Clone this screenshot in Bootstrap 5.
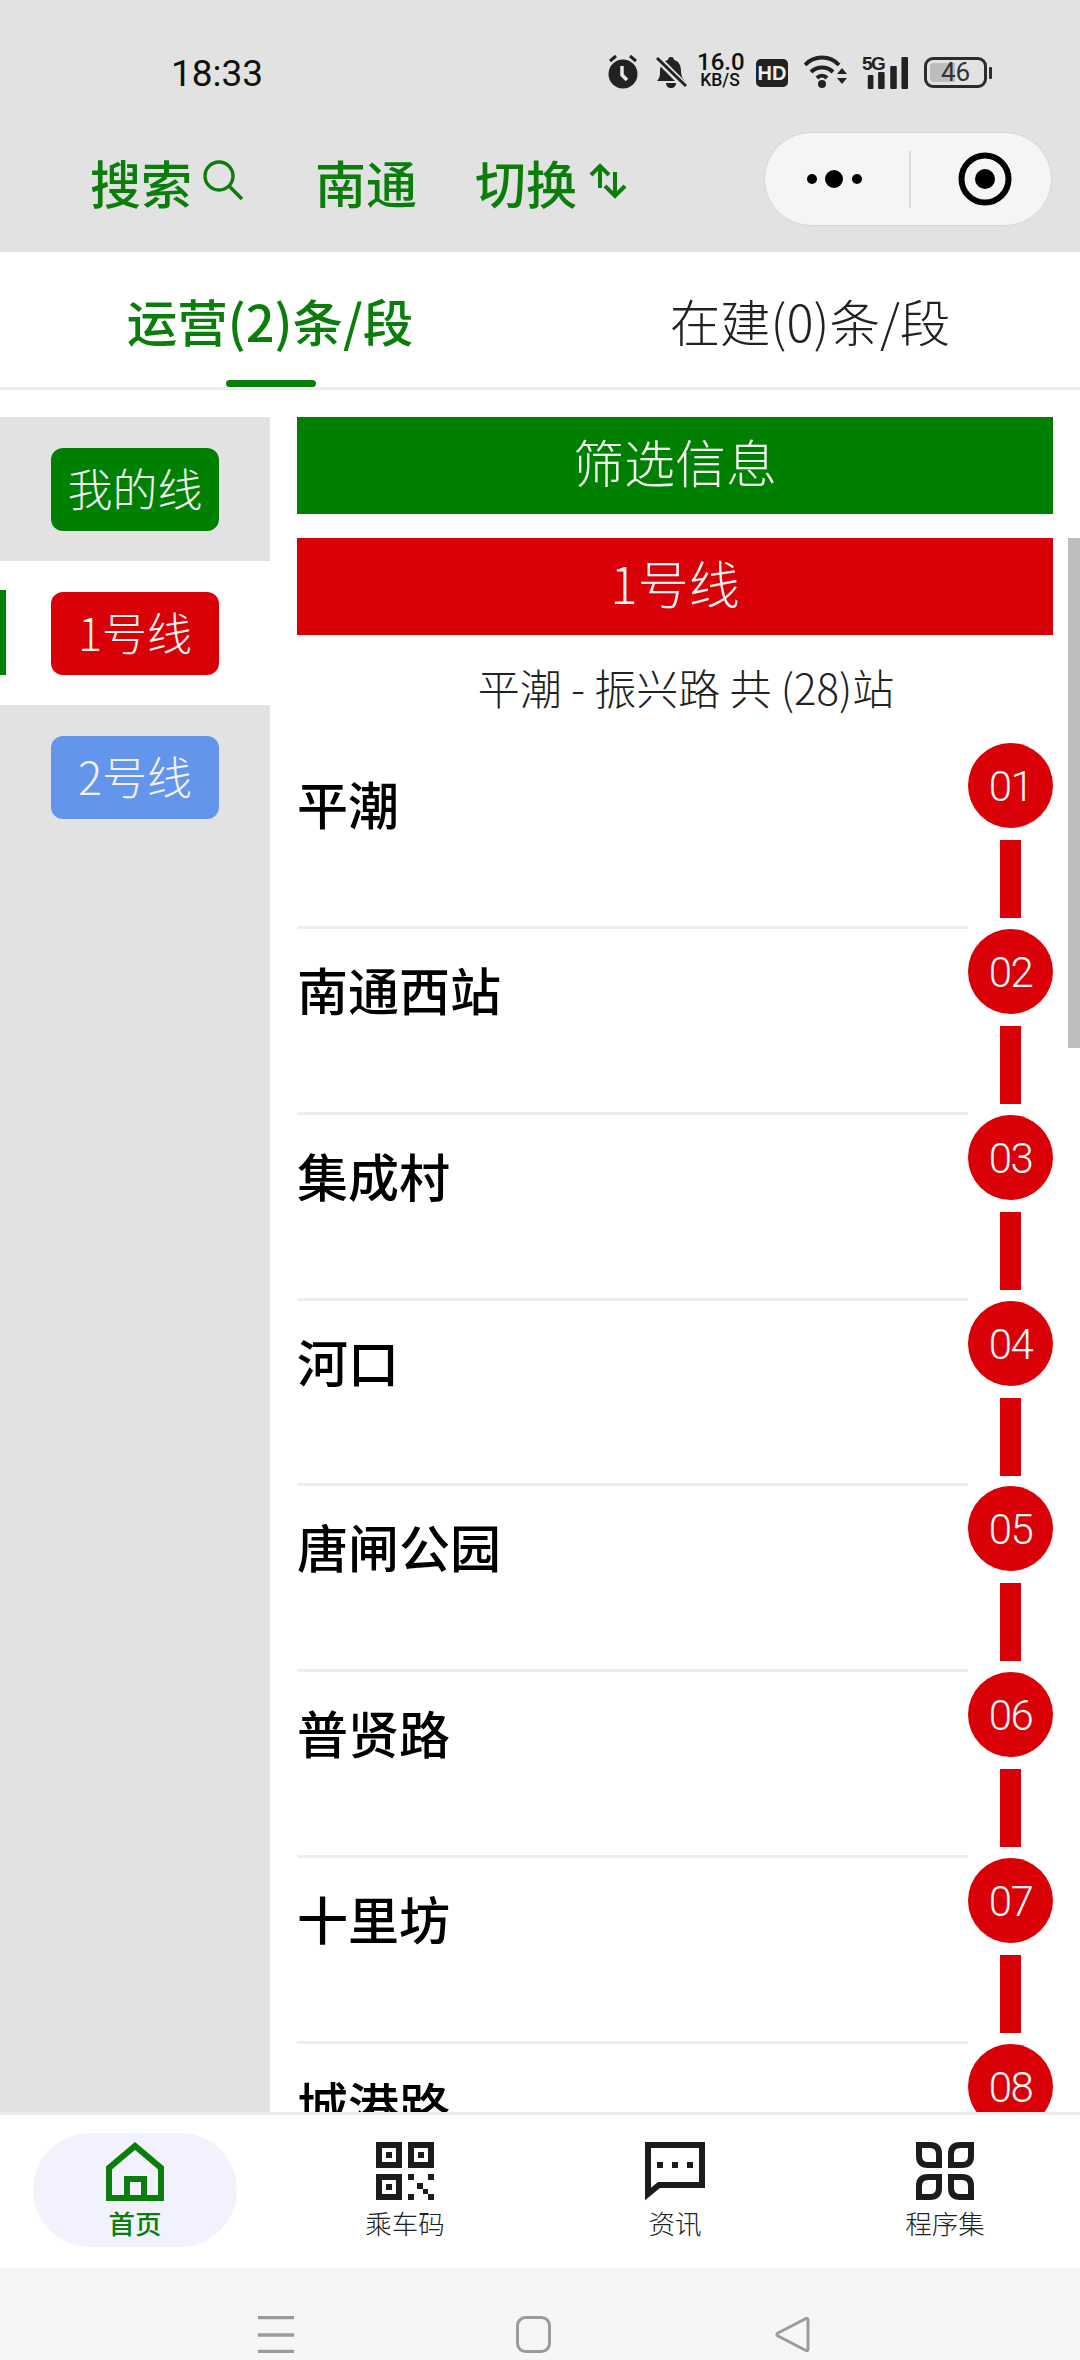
<!DOCTYPE html>
<html lang="zh-CN">
<head>
<meta charset="utf-8">
<title>南通地铁</title>
<link href="https://cdn.jsdelivr.net/npm/bootstrap@5.3.0/dist/css/bootstrap.min.css" rel="stylesheet">
<style>
html,body{margin:0;height:2360px;overflow:hidden;background:#fff}
body{font-family:"Noto Sans CJK SC","Noto Sans",sans-serif;font-weight:300;color:#111}
svg{display:block;flex:none}
.app-shell{width:1080px;height:2360px}
.top-area{height:252px;background:#e2e2e2;flex:none}
.status-row{height:132px;padding:52px 0 0 171px}
.clock{font:400 37px/44px Roboto,sans-serif;width:436px;color:#111}
.speed{width:46px;margin:0 13px 0 10px;font-family:Roboto,sans-serif;color:#111;text-align:center;font-weight:500}
.speed b{display:block;font-size:24px;line-height:21px;font-weight:500}
.speed i{display:block;font-style:normal;font-size:17.5px;line-height:15px}
.hd-box{width:32px;height:28px;background:#222;border-radius:5px;color:#eee;font:700 20px/28px "Liberation Sans",sans-serif;text-align:center;margin-right:16px}
.bars-wrap{width:43px;height:36px;margin:0 16px 0 17px}
.five-g{left:-3px;top:-1px;font:700 19px/19px "Liberation Sans",sans-serif;color:#222;letter-spacing:-1.5px}
.batt{width:63px;height:31px;border:3px solid #2c2c2c;border-radius:9px;overflow:hidden;font:400 26px/25px Roboto,sans-serif;text-align:center;color:#333}
.batt-fill{left:3px;top:3px;bottom:3px;width:25px;background:#bdbdbd;border-radius:4px 0 0 4px}
.batt-num{z-index:1}
.batt-tip{width:3px;height:12px;background:#2c2c2c;border-radius:1px;margin-left:2px}
.head-row{height:100px;padding-left:90px}
.head-txt{font-size:51px;line-height:60px;font-weight:500;color:#0a7d0a}
.capsule{left:764px;top:132px;width:288px;height:94px;border-radius:47px;background:#f5f5f5;border:1px solid #d6d6d6}
.cap-line{width:2px;height:57px;background:#dcdcdc}
.tab-row{height:138px;flex:none;border-bottom:3px solid #eeeeee}
.tab-cell{width:540px;font-size:50.500px;line-height:60px;padding-top:38px;text-align:center;font-weight:300;color:#222}
.tab-cell.on{color:#0a7d0a;font-weight:500}
.tab-mark{left:226px;bottom:0;width:90px;height:7px;background:#0a7d0a;border-radius:4px}
.mid-area{flex:1 1 0;min-height:0;padding-top:27px;overflow:hidden}
.side-col{width:270px;background:#e2e2e2;flex:none}
.side-item{height:144px;padding:31px 0 0 51px}
.side-item.on{background:#fff}
.side-bar{left:0;top:29px;width:6px;height:85px;background:#008000}
.line-chip{width:168px;height:83px;border-radius:12px;color:#f2f2f2;font-size:45px;line-height:80px;text-align:center}
.bg-mine{background:#008000}
.bg-one{background:#d90007}
.bg-two{background:#6495ed}
.list-col{width:756px;margin-left:27px;flex:none}
.banner{height:97px;color:#f2f2f2;font-size:51px;line-height:89px;text-align:center}
.banner-gap{margin-top:24px}
.sub-line{height:108px;font-size:42px;line-height:48px;padding-top:28px;text-align:center;color:#222;padding-left:22px}
.stop-row{height:185.85px}
.stop-name{width:671px;border-bottom:3px solid #eeeeee;font-size:51px;line-height:60px;font-weight:500;color:#000;padding-top:30px;height:185.85px}
.stop-rail{width:85px}
.stop-dot{width:85px;height:85px;border-radius:50%;background:#d90007;color:#f5f5f5;font:300 42px/87px Roboto,sans-serif;letter-spacing:-1.5px;text-align:center}
.stop-link{width:21px;height:78px;background:#d90007;margin:12px auto 0}
.scroll-thumb{left:1068px;top:538px;width:12px;height:510px;background:#bdbdbd}
.tab-bar{height:156px;flex:none;border-top:3px solid #ececec;background:#fff;z-index:2;padding-top:18px}
.tab-item{width:270px}
.tab-item.on::before{content:"";position:absolute;left:33px;top:0;width:204px;height:114px;border-radius:57px;background:#f1f2fd}
.tab-glyph{height:61px;padding-top:9px;z-index:1}
.tab-name{font-size:26.500px;line-height:32px;margin-top:13px;color:#222;z-index:1}
.tab-item.on .tab-name{color:#0a7d0a;font-weight:500}
.sys-bar{height:92px;flex:none;background:#f6f6f6;padding-top:48px;padding-left:258px}
</style>
</head>
<body>
<div class="app-shell d-flex flex-column position-relative">

  <div class="top-area position-relative">
    <div class="status-row d-flex align-items-start">
      <div class="clock">18:33</div>
      <svg width="32" height="36" viewBox="0 0 32 36" style="margin-top:1px"><circle cx="16" cy="21" r="14.5" fill="#222"/><path d="M3 8 9 3M29 8 23 3" stroke="#222" stroke-width="3"/><path d="M15 13v9l5 5" fill="none" stroke="#e8e8e8" stroke-width="3.5"/></svg>
      <svg width="32" height="34" viewBox="0 0 32 34" style="margin:4px 0 0 16px"><path d="M16 1c2 0 3 1 3 3 5 1 7 6 7 11 0 4 1 7 4 10H2c3-3 3-6 3-10 0-5 3-10 8-11 0-2 1-3 3-3Z" fill="#222"/><path d="M11 27h10c0 3-2 5-5 5s-5-2-5-5Z" fill="#222"/><path d="M3 3l26 26" stroke="#e2e2e2" stroke-width="7"/><path d="M2 2l29 28" stroke="#222" stroke-width="3"/></svg>
      <div class="speed"><b>16.0</b><i>KB/S</i></div>
      <div class="hd-box" style="margin-top:7px">HD</div>
      <svg width="44" height="34" viewBox="0 0 44 34" style="margin-top:2px"><path d="M1 11c9-10 25-10 34 0M7 18c6-6 16-6 22 0M13 24c3-3 7-3 10 0" fill="none" stroke="#222" stroke-width="4"/><circle cx="18" cy="30" r="4" fill="#222"/><path d="M33 20h10l-5-6ZM33 24h10l-5 6Z" fill="#222"/></svg>
      <div class="bars-wrap position-relative" style="margin-top:3px">
        <span class="five-g position-absolute">5G</span>
        <svg width="43" height="36" viewBox="0 0 46 36" preserveAspectRatio="none"><rect x="3" y="20" width="6" height="14" rx="1" fill="#222"/><rect x="14" y="17" width="7" height="17" rx="1" fill="#222"/><rect x="27" y="11" width="7" height="23" rx="1" fill="#222"/><rect x="39" y="2" width="7" height="32" rx="1" fill="#222"/></svg>
      </div>
      <div class="d-flex align-items-center" style="margin-top:5px">
        <div class="batt position-relative"><span class="batt-fill position-absolute"></span><span class="batt-num position-relative">46</span></div>
        <div class="batt-tip"></div>
      </div>
    </div>
    <div class="head-row d-flex align-items-center">
      <span class="head-txt">搜索</span>
      <svg width="42" height="42" viewBox="0 0 42 42" style="margin-left:10px;margin-top:-4px"><circle cx="17" cy="17" r="14" fill="none" stroke="#0a7d0a" stroke-width="3.4"/><path d="M27 27 40 40" stroke="#0a7d0a" stroke-width="3.6"/></svg>
      <span class="head-txt" style="margin-left:71px">南通</span>
      <span class="head-txt" style="margin-left:58px">切换</span>
      <svg width="40" height="36" viewBox="0 0 40 36" style="margin-left:10px;margin-top:-2px"><path d="M13 25V4M4 12l9-9 9 9" fill="none" stroke="#0a7d0a" stroke-width="4"/><path d="M28 9v24M18 23l10 10 10-10" fill="none" stroke="#0a7d0a" stroke-width="4"/></svg>
    </div>
    <div class="capsule position-absolute d-flex align-items-center">
      <svg width="60" height="20" viewBox="0 0 60 20" style="margin-left:38px"><circle cx="9" cy="10" r="5" fill="#000"/><circle cx="31" cy="10" r="9" fill="#000"/><circle cx="54" cy="10" r="5" fill="#000"/></svg>
      <span class="cap-line" style="margin-left:46px"></span>
      <svg width="54" height="54" viewBox="0 0 54 54" style="margin-left:47px"><circle cx="27" cy="27" r="23.5" fill="none" stroke="#000" stroke-width="6"/><circle cx="27" cy="27" r="10" fill="#000"/></svg>
    </div>
  </div>

  <div class="tab-row d-flex position-relative">
    <div class="tab-cell on">运营(2)条/段</div>
    <div class="tab-cell">在建(0)条/段</div>
    <span class="tab-mark position-absolute"></span>
  </div>

  <div class="mid-area d-flex position-relative">
    <div class="side-col">
      <div class="side-item"><div class="line-chip bg-mine">我的线</div></div>
      <div class="side-item on position-relative"><span class="side-bar position-absolute"></span><div class="line-chip bg-one">1号线</div></div>
      <div class="side-item"><div class="line-chip bg-two">2号线</div></div>
    </div>
    <div class="list-col">
      <div class="banner bg-mine">筛选信息</div>
      <div class="banner banner-gap bg-one">1号线</div>
      <div class="sub-line">平潮 - 振兴路 共 (28)站</div>
      <div class="stop-row d-flex"><div class="stop-name">平潮</div><div class="stop-rail"><div class="stop-dot">01</div><div class="stop-link"></div></div></div>
      <div class="stop-row d-flex"><div class="stop-name">南通西站</div><div class="stop-rail"><div class="stop-dot">02</div><div class="stop-link"></div></div></div>
      <div class="stop-row d-flex"><div class="stop-name">集成村</div><div class="stop-rail"><div class="stop-dot">03</div><div class="stop-link"></div></div></div>
      <div class="stop-row d-flex"><div class="stop-name">河口</div><div class="stop-rail"><div class="stop-dot">04</div><div class="stop-link"></div></div></div>
      <div class="stop-row d-flex"><div class="stop-name">唐闸公园</div><div class="stop-rail"><div class="stop-dot">05</div><div class="stop-link"></div></div></div>
      <div class="stop-row d-flex"><div class="stop-name">普贤路</div><div class="stop-rail"><div class="stop-dot">06</div><div class="stop-link"></div></div></div>
      <div class="stop-row d-flex"><div class="stop-name">十里坊</div><div class="stop-rail"><div class="stop-dot">07</div><div class="stop-link"></div></div></div>
      <div class="stop-row d-flex"><div class="stop-name">城港路</div><div class="stop-rail"><div class="stop-dot">08</div><div class="stop-link"></div></div></div>
    </div>
  </div>
  <div class="scroll-thumb position-absolute"></div>

  <nav class="tab-bar d-flex position-relative">
    <div class="tab-item on position-relative d-flex flex-column align-items-center">
      <div class="tab-glyph position-relative"><svg width="60" height="60" viewBox="0 0 60 60"><path d="M4 56V26L30 4 56 26V56Z" fill="none" stroke="#0a7d0a" stroke-width="6"/><path d="M22 56V37H39V56" fill="none" stroke="#0a7d0a" stroke-width="6"/></svg></div>
      <div class="tab-name position-relative">首页</div>
    </div>
    <div class="tab-item position-relative d-flex flex-column align-items-center">
      <div class="tab-glyph position-relative"><svg width="58" height="58" viewBox="0 0 58 58" fill="#1c1c1c"><path fill-rule="evenodd" d="M0 0h26v26H0ZM6 6v14h14V6ZM32 0h26v26H32Zm6 6v14h14V6ZM0 32h26v26H0Zm6 6v14h14V38Z"/><rect x="10" y="10" width="6" height="6"/><rect x="42" y="10" width="6" height="6"/><rect x="10" y="42" width="6" height="6"/><rect x="32" y="32" width="6" height="6"/><rect x="52" y="32" width="6" height="6"/><rect x="41" y="41" width="6" height="6"/><rect x="47" y="47" width="5" height="5"/><rect x="52" y="52" width="6" height="6"/><rect x="32" y="52" width="6" height="6"/></svg></div>
      <div class="tab-name position-relative">乘车码</div>
    </div>
    <div class="tab-item position-relative d-flex flex-column align-items-center">
      <div class="tab-glyph position-relative"><svg width="60" height="60" viewBox="0 0 60 60"><path d="M3 3H57V43H14L3 52Z" fill="none" stroke="#1c1c1c" stroke-width="6"/><rect x="12" y="20" width="6" height="6" fill="#1c1c1c"/><rect x="27" y="20" width="6" height="6" fill="#1c1c1c"/><rect x="42" y="20" width="6" height="6" fill="#1c1c1c"/></svg></div>
      <div class="tab-name position-relative">资讯</div>
    </div>
    <div class="tab-item position-relative d-flex flex-column align-items-center">
      <div class="tab-glyph position-relative"><svg width="58" height="58" viewBox="0 0 58 58" fill="none" stroke="#1c1c1c" stroke-width="6"><path d="M3 3H14Q23 3 23 12V23H12Q3 23 3 14Z"/><path d="M55 3H44Q35 3 35 12V23H46Q55 23 55 14Z"/><path d="M3 55H14Q23 55 23 46V35H12Q3 35 3 44Z"/><path d="M55 55H44Q35 55 35 46V35H46Q55 35 55 44Z"/></svg></div>
      <div class="tab-name position-relative">程序集</div>
    </div>
  </nav>

  <div class="sys-bar d-flex align-items-start">
    <svg width="36" height="37" viewBox="0 0 36 37"><path d="M0 1.5H36M0 19H36M0 35.5H36" stroke="#9b9b9b" stroke-width="3.4"/></svg>
    <svg width="35" height="37" viewBox="0 0 35 37" style="margin-left:222px"><rect x="1.5" y="1.5" width="32" height="34" rx="8" fill="none" stroke="#9b9b9b" stroke-width="3"/></svg>
    <svg width="35" height="37" viewBox="0 0 35 37" style="margin-left:224px"><path d="M31 2.5C32 2 33 3 33 4V33C33 34.500 32 35 31 34.500L3 20C1.500 19 1.500 18 3 17Z" fill="none" stroke="#9b9b9b" stroke-width="3"/></svg>
  </div>
</div>
<script src="https://cdn.jsdelivr.net/npm/bootstrap@5.3.0/dist/js/bootstrap.bundle.min.js"></script>
</body>
</html>
